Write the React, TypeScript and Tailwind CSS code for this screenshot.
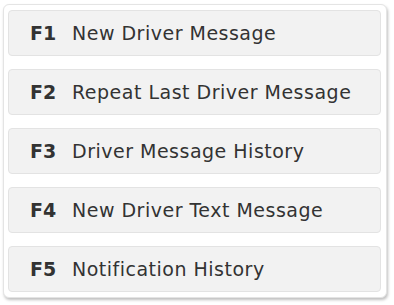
import React from "react";

const items = [
  ["F1", "New Driver Message"],
  ["F2", "Repeat Last Driver Message"],
  ["F3", "Driver Message History"],
  ["F4", "New Driver Text Message"],
  ["F5", "Notification History"],
];

export default function App() {
  return (
    <div className="w-[394px] h-[305px] bg-white pl-[3px] pt-[4px]" style={{ fontFamily: '"DejaVu Sans", sans-serif' }}>
      <div className="w-[384px] h-[294px] bg-white rounded-[6px] border border-[#e4e4e4] shadow-[1px_2px_3px_rgba(0,0,0,0.25)] pl-[4px] pr-[5px] pt-[5px] flex flex-col gap-[13px]">
        {items.map(([k, l]) => (
          <div key={k} className="h-[46px] bg-[#f2f2f2] border border-[#e3e3e3] rounded-[4px] flex items-center text-[#2e2e2e] text-[19px] leading-none">
            <span className="w-[63px] pl-[21px] font-semibold text-[#333333]">{k}</span>
            <span className="tracking-[0.5px] text-[#333333]">{l}</span>
          </div>
        ))}
      </div>
    </div>
  );
}
